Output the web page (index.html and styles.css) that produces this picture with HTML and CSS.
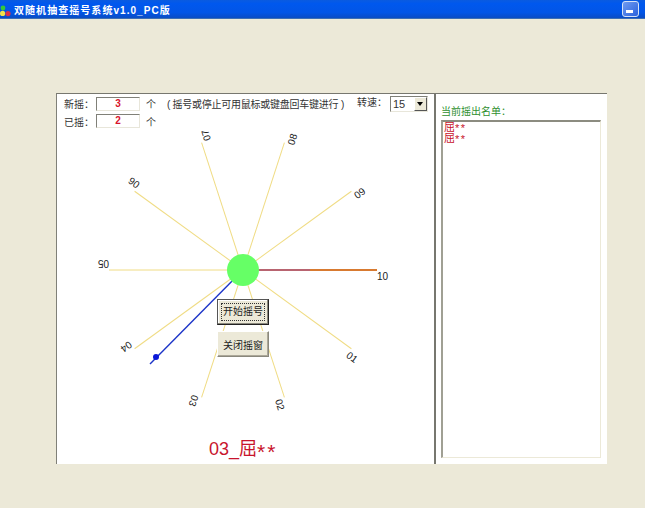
FILE: index.html
```html
<!DOCTYPE html>
<html lang="zh-CN">
<head>
<meta charset="utf-8">
<title>双随机抽查摇号系统v1.0_PC版</title>
<link rel="stylesheet" href="styles.css">
</head>
<body>
<header class="titlebar">
  <svg class="app-icon" width="11" height="12" viewBox="0 0 11 12">
    <circle cx="3" cy="3" r="2.4" fill="#35c83a"/>
    <circle cx="2.6" cy="8.4" r="2.6" fill="#f2e24a"/>
    <circle cx="8" cy="8.6" r="2.6" fill="#d9304a"/>
  </svg>
  <span class="title-text">双随机抽查摇号系统v1.0_PC版</span>
  <span class="min-btn"><span class="min-glyph"></span></span>
</header>
<main class="panel">
  <section class="stage">
    <svg class="wheel" width="377" height="370" viewBox="57 94 377 370">
      <g class="spokes">
        <g transform="rotate(36 243 270)"><line x1="243" y1="270" x2="377" y2="270"/><text x="377" y="280">01</text></g>
        <g transform="rotate(72 243 270)"><line x1="243" y1="270" x2="377" y2="270"/><text x="377" y="280">02</text></g>
        <g transform="rotate(108 243 270)"><line x1="243" y1="270" x2="377" y2="270"/><text x="377" y="280">03</text></g>
        <g transform="rotate(144 243 270)"><line x1="243" y1="270" x2="377" y2="270"/><text x="377" y="280">04</text></g>
        <g transform="rotate(180 243 270)"><line x1="243" y1="270" x2="377" y2="270"/><text x="377" y="280">05</text></g>
        <g transform="rotate(216 243 270)"><line x1="243" y1="270" x2="377" y2="270"/><text x="377" y="280">06</text></g>
        <g transform="rotate(252 243 270)"><line x1="243" y1="270" x2="377" y2="270"/><text x="377" y="280">07</text></g>
        <g transform="rotate(288 243 270)"><line x1="243" y1="270" x2="377" y2="270"/><text x="377" y="280">08</text></g>
        <g transform="rotate(324 243 270)"><line x1="243" y1="270" x2="377" y2="270"/><text x="377" y="280">09</text></g>
        <g><text x="377" y="280">10</text></g>
      </g>
      <line class="hand-inner" x1="243" y1="270" x2="310" y2="270"/>
      <line class="hand-outer" x1="310" y1="270" x2="377" y2="270"/>
      <line class="needle" x1="243" y1="270" x2="150" y2="364"/>
      <circle class="needle-dot" cx="156" cy="357" r="3"/>
      <circle class="hub" cx="243" cy="270" r="16"/>
    </svg>

    <div class="controls">
      <div class="row row-first">
        <span class="label">新摇：</span>
        <span class="count">3</span>
        <span class="unit">个</span>
        <span class="hint">( 摇号或停止可用鼠标或键盘回车键进行 )</span>
        <span class="speed-label">转速：</span>
        <span class="select"><span class="select-value">15</span><span class="select-arrow"></span></span>
      </div>
      <div class="row">
        <span class="label">已摇：</span>
        <span class="count">2</span>
        <span class="unit">个</span>
      </div>
    </div>

    <button class="btn btn-start" type="button"><span class="btn-focus">开始摇号</span></button>
    <button class="btn btn-close" type="button">关闭摇窗</button>

    <div class="result">03_屈<span class="result-stars">**</span></div>
  </section>

  <aside class="side">
    <div class="side-title">当前摇出名单：</div>
    <div class="listbox">
      <div class="list-row">屈<span class="list-stars">**</span></div>
      <div class="list-row">屈<span class="list-stars">**</span></div>
    </div>
  </aside>
</main>
</body>
</html>
```

FILE: styles.css
```css
* { box-sizing: border-box; }

html, body {
  margin: 0;
  height: 100%;
}

body {
  background: #ece9d8;
  font-family: "Liberation Sans", "Noto Sans CJK SC", sans-serif;
  overflow: hidden;
}

.titlebar {
  height: 19px;
  display: flex;
  align-items: center;
  background: linear-gradient(180deg, #0a5be0 0%, #0058ee 20%, #0255e6 70%, #0a4cc4 100%);
  border-bottom: 1px solid #3d6fb5;
  position: relative;
}

.app-icon {
  flex: none;
  margin: 4px 3px 0 0;
}

.title-text {
  color: #fff;
  font-size: 10px;
  font-weight: 700;
  letter-spacing: 1.05px;
  white-space: nowrap;
}

.min-btn {
  position: absolute;
  left: 622px;
  top: 1px;
  width: 17px;
  height: 16px;
  border: 1px solid #d5e2f6;
  border-radius: 3px;
  background: linear-gradient(135deg, #6f9bf0, #2a62dd);
}

.min-glyph {
  position: absolute;
  left: 3px;
  bottom: 3px;
  width: 7px;
  height: 3px;
  background: #fff;
}

.panel {
  display: flex;
  width: 551px;
  height: 371px;
  margin: 74px 0 0 56px;
  background: #fff;
  border-top: 1px solid #77776f;
  border-left: 1px solid #808078;
}

.stage {
  position: relative;
  width: 379px;
  display: flex;
  flex-direction: column;
  border-right: 2px solid #77776f;
}

.wheel {
  position: absolute;
  left: 0;
  top: 0;
}

.spokes line {
  stroke: #f0dc84;
  stroke-width: 1;
}

.spokes text {
  font-family: "Liberation Sans", sans-serif;
  font-size: 10px;
  fill: #222;
}

.hand-inner {
  stroke: #a03040;
  stroke-width: 1.5;
}

.hand-outer {
  stroke: #d87a30;
  stroke-width: 2;
}

.needle {
  stroke: #1c34c8;
  stroke-width: 1.4;
}

.needle-dot {
  fill: #0a18d8;
}

.hub {
  fill: #66ff66;
}

.controls {
  position: relative;
  padding: 1px 0 0 7px;
  font-size: 10px;
  color: #333;
}

.row {
  display: flex;
  align-items: center;
  height: 14px;
}

.row-first {
  height: 17px;
  margin-bottom: 2px;
}

.label {
  width: 32px;
  white-space: nowrap;
}

.count {
  width: 44px;
  height: 14px;
  line-height: 12px;
  text-align: center;
  color: #d8142c;
  font-weight: 700;
  font-size: 10px;
  background: #fff;
  border-style: solid;
  border-width: 1px;
  border-color: #808078 #e8e6da #e8e6da #808078;
}

.unit {
  margin-left: 6px;
  width: 21px;
}

.hint {
  width: 190px;
  white-space: nowrap;
  font-size: 10px;
  letter-spacing: -0.25px;
}

.speed-label {
  width: 33px;
  white-space: nowrap;
  margin-bottom: 4px;
}

.select {
  width: 38px;
  height: 16px;
  display: flex;
  align-items: center;
  justify-content: space-between;
  background: #fff;
  border-style: solid;
  border-width: 1px;
  border-color: #808078 #e8e6da #e8e6da #808078;
  padding-left: 2px;
  font-size: 11px;
}

.select-arrow {
  position: relative;
  width: 13px;
  height: 14px;
  background: #ece9d8;
  border-style: solid;
  border-width: 1px;
  border-color: #fff #555 #555 #fff;
}

.select-arrow::after {
  content: "";
  position: absolute;
  left: 2px;
  top: 4px;
  border-style: solid;
  border-width: 4px 3.5px 0;
  border-color: #000 transparent transparent;
}

.btn {
  position: absolute;
  left: 160px;
  width: 52px;
  height: 26px;
  padding: 0;
  background: #ece9d8;
  color: #222;
  font-family: inherit;
  font-size: 10px;
  border-style: solid;
  border-width: 1px;
  border-color: #fff #8a887c #8a887c #fff;
}

.btn-start {
  top: 205px;
  border-color: #555 #222 #222 #555;
  box-shadow: inset -1px -1px 0 #8a887c, inset 1px 1px 0 #fff;
}

.btn-focus {
  display: block;
  margin: 3px;
  line-height: 16px;
  border: 1px dotted #333;
}

.btn-close {
  top: 237px;
  box-shadow: inset -1px -1px 0 #aca899;
}

.result {
  position: relative;
  margin-top: auto;
  margin-bottom: 2px;
  padding-left: 152px;
  color: #c8142c;
  font-size: 18px;
  line-height: 24px;
  white-space: nowrap;
}

.result-stars {
  font-size: 21px;
  line-height: 1;
  letter-spacing: 2px;
  vertical-align: -4px;
}

.side {
  flex: 1;
  display: flex;
  flex-direction: column;
  padding: 12px 6px 6px 5px;
}

.side-title {
  color: #2f8f2f;
  font-size: 10px;
  line-height: 12px;
  height: 14px;
  white-space: nowrap;
}

.listbox {
  flex: 1;
  padding: 0 0 0 1px;
  color: #c8142c;
  font-size: 11px;
  border-style: solid;
  border-width: 2px 1px 1px 2px;
  border-color: #8c8c80 #ece9d8 #ece9d8 #a0a094;
}

.list-row {
  display: flex;
  height: 11px;
  line-height: 11px;
}

.list-stars {
  font-size: 11px;
  letter-spacing: 1.5px;
  line-height: 9px;
  padding-top: 2px;
}
```
